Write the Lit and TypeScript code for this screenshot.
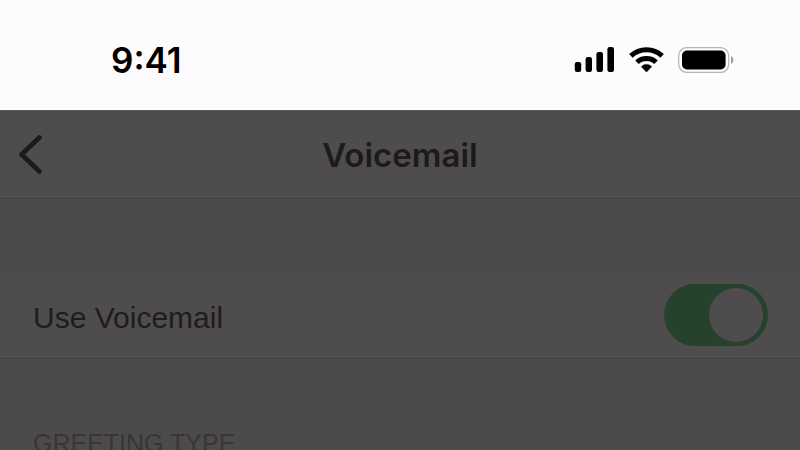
import { LitElement, html, css } from "lit";
import { customElement, state } from "lit/decorators.js";

@customElement("status-bar")
class StatusBar extends LitElement {
  static styles = css`
    :host {
      display: flex;
      justify-content: space-between;
      align-items: center;
      box-sizing: border-box;
      height: 110px;
      padding: 10px 66px 0 111px;
      background: #fcfcfe;
      color: #000;
      font: 600 35px/40px Inter, sans-serif;
    }
    .icons {
      display: flex;
      align-items: center;
      gap: 14px;
    }
    svg {
      display: block;
    }
  `;
  render() {
    return html`
      <time>9:41</time>
      <div class="icons">
        <svg width="40" height="26" viewBox="0 0 40 26" role="img" aria-label="Signal">
          <rect x="0.8" y="15" width="6.4" height="10" rx="2.2" />
          <rect x="11.6" y="10" width="6.4" height="15" rx="2.2" />
          <rect x="22.4" y="5" width="6.6" height="20" rx="2.2" />
          <rect x="33.4" y="0" width="6.6" height="25" rx="2.2" />
        </svg>
        <svg width="36" height="26" viewBox="0 0 36 26" role="img" aria-label="Wi-Fi">
          <g fill="none" stroke="#000" stroke-width="5">
            <path d="M2.9 8.9C11.4 0.6 25.6 0.6 34.1 8.9" />
            <path d="M9 15.2C14 10.2 23 10.2 28 15.2" />
          </g>
          <path d="M18.5 25L13.4 19.7C16.2 16.6 20.8 16.6 23.6 19.7Z" stroke="#000" stroke-width="0.6" stroke-linejoin="round" />
        </svg>
        <svg width="56" height="26" viewBox="0 0 56 26" role="img" aria-label="Battery">
          <rect x="0.7" y="0.7" width="50" height="24.6" rx="8" fill="none" stroke="#b4b4b6" stroke-width="1.2" />
          <rect x="4" y="3.5" width="43.6" height="19" rx="5" />
          <path d="M53 9C56.2 10.2 56.2 15.8 53 17Z" fill="#a0a0a2" />
        </svg>
      </div>
    `;
  }
}

@customElement("nav-bar")
class NavBar extends LitElement {
  static styles = css`
    :host {
      display: grid;
      grid-template-columns: 64px 1fr 64px;
      align-items: center;
      box-sizing: border-box;
      height: 89px;
      border-top: 1px solid #5c5b5b;
      border-bottom: 1px solid #434143;
      background: #4e4c4c;
      color: #1c1a1c;
    }
    button {
      display: flex;
      align-items: center;
      height: 64px;
      padding: 0 0 0 18px;
      border: 0;
      background: none;
      color: inherit;
    }
    h1 {
      margin: 0;
      text-align: center;
      font: 600 33px/40px Inter, sans-serif;
    }
  `;
  render() {
    return html`
      <button type="button" aria-label="Back">
        <svg width="26" height="40" viewBox="0 0 26 40" fill="none" stroke="currentColor"
          stroke-width="4.8" stroke-linecap="round" stroke-linejoin="round">
          <path d="M21.4 2.6L3.6 19.4L21.4 36.4" />
        </svg>
      </button>
      <h1>Voicemail</h1>
    `;
  }
}

@customElement("app-root")
class AppRoot extends LitElement {
  static styles = css`
    :host {
      display: block;
      min-height: 100vh;
      background: #4c4a4d;
      font-family: "Liberation Sans", Arial, sans-serif;
    }
    .setting {
      display: flex;
      justify-content: space-between;
      align-items: center;
      box-sizing: border-box;
      height: 87px;
      margin-top: 73px;
      padding: 0 32px 0 33px;
      border-bottom: 1px solid #434143;
      background: #4e4c4c;
      color: #1e1c1e;
      font-size: 30px;
      line-height: 36px;
    }
    .label {
      padding-top: 6px;
    }
    .switch {
      appearance: none;
      display: flex;
      justify-content: flex-start;
      align-items: center;
      box-sizing: border-box;
      width: 104px;
      height: 62px;
      margin: 0;
      padding: 0 5px;
      border-radius: 31px;
      background: #5c5a5c;
    }
    .switch:checked {
      justify-content: flex-end;
      background: #26422c;
    }
    .switch::before {
      content: "";
      width: 54px;
      height: 54px;
      border-radius: 50%;
      background: #4e4c4c;
    }
    h2 {
      margin: 0;
      padding: 68px 33px 0;
      color: #383635;
      font-size: 25px;
      font-weight: 400;
      line-height: 32px;
    }
    main {
      height: calc(100vh - 199px);
      overflow: hidden;
    }
  `;

  @state() private enabled = true;

  render() {
    return html`
      <status-bar></status-bar>
      <nav-bar></nav-bar>
      <main>
        <div class="setting">
          <label class="label" for="use">Use Voicemail</label>
          <input class="switch" id="use" type="checkbox" role="switch" .checked=${this.enabled}
            @change=${(e: Event) => (this.enabled = (e.target as HTMLInputElement).checked)} />
        </div>
        <h2>GREETING TYPE</h2>
      </main>
    `;
  }
}
